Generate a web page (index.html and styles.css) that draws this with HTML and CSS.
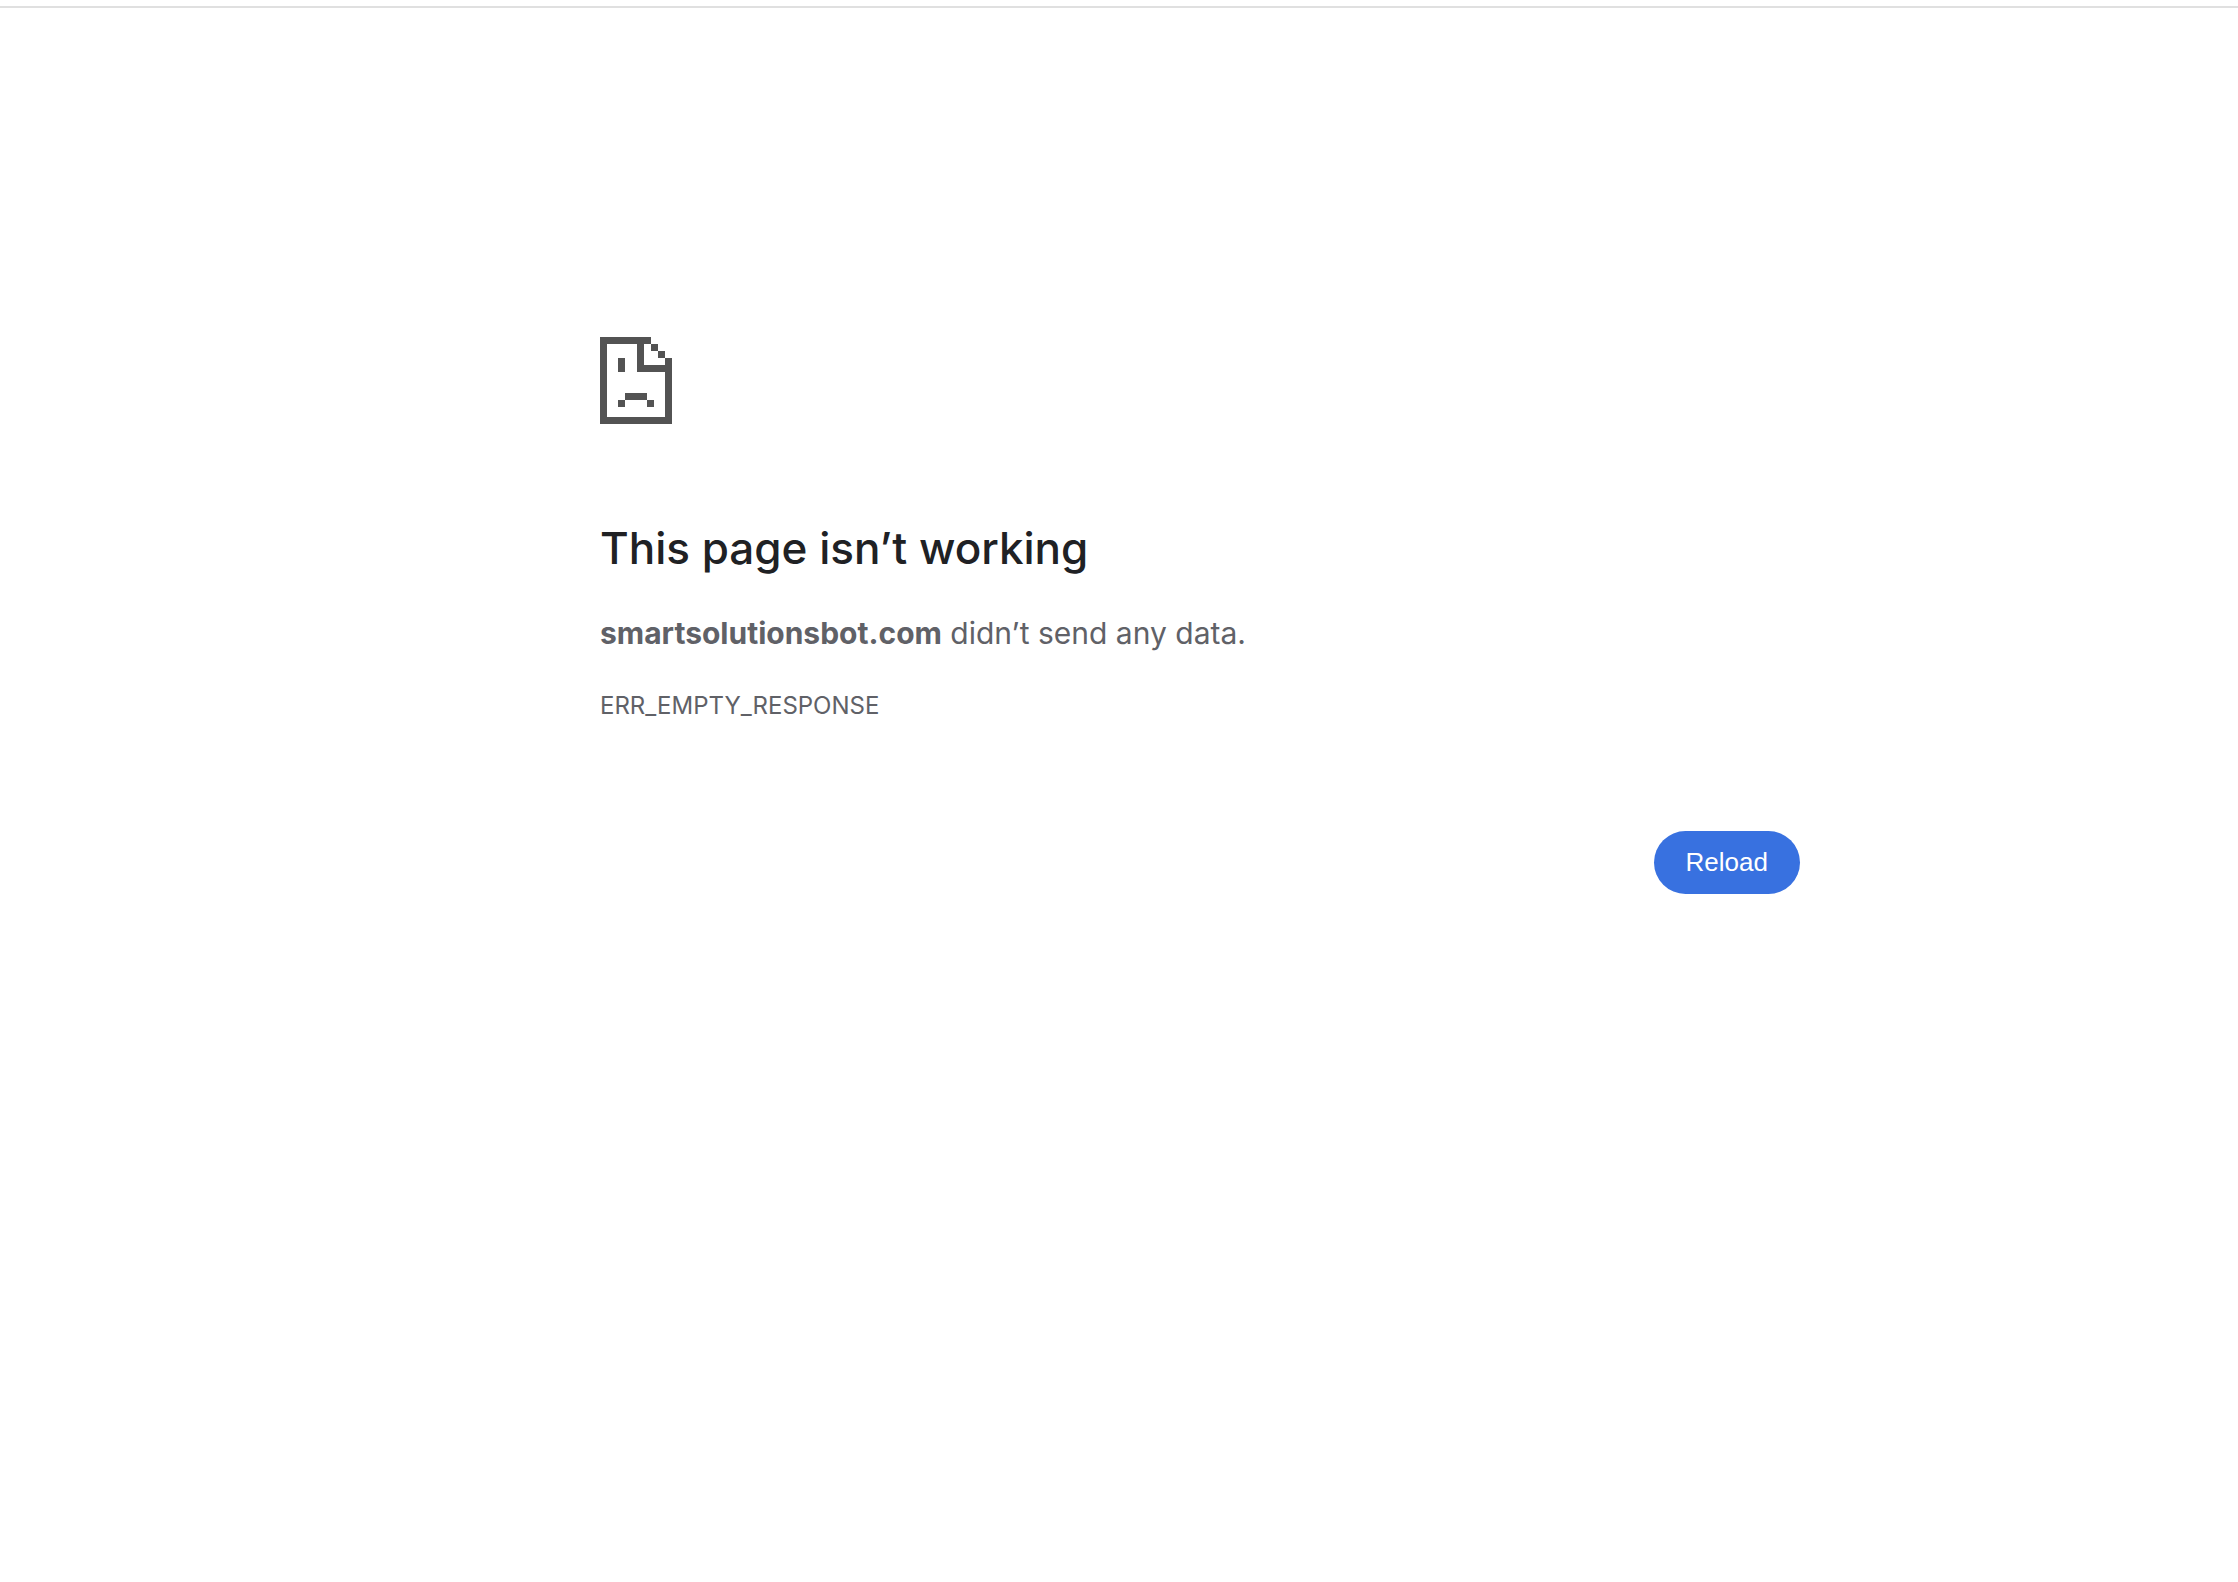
FILE: index.html
```html
<!DOCTYPE html>
<html lang="en">
<head>
  <meta charset="UTF-8">
  <meta name="viewport" content="width=device-width, initial-scale=1.0">
  <title>smartsolutionsbot.com</title>
  <link rel="stylesheet" href="styles.css">
</head>
<body>
  <main class="error-page">
    <svg class="error-icon" viewBox="0 0 72 87" shape-rendering="crispEdges" aria-hidden="true">
      <!-- page outline -->
      <path d="M0 0h51v7H7v73h58V35H37V7h7v21h21v-7h7v66H0z"/>
      <!-- folded corner -->
      <path d="M51 7h7v7h-7zM58 14h7v7h-7z"/>
      <!-- face -->
      <path d="M18 21h7v14h-7zM25 56h22v7H25zM18 63h7v7h-7zM47 63h7v7h-7z"/>
    </svg>
    <h1>This page isn’t working</h1>
    <p class="message"><strong>smartsolutionsbot.com</strong> didn’t send any data.</p>
    <p class="error-code">ERR_EMPTY_RESPONSE</p>
    <div class="buttons">
      <button type="button" class="reload" onclick="location.reload()">Reload</button>
    </div>
  </main>
</body>
</html>
```

FILE: styles.css
```css
body {
  margin: 0;
  padding: 6px 0 0 162px;
  background: #fff;
  color: #606167;
  font-family: Inter, "Liberation Sans", sans-serif;
}

body::before {
  content: "";
  display: block;
  height: 2px;
  margin-left: -162px;
  background: #e0e0e0;
}

.error-page {
  max-width: 1200px;
  margin: 0 auto;
  padding-top: 329px;
}

.error-icon {
  display: block;
  width: 72px;
  height: 87px;
  fill: #535353;
}

h1 {
  margin: 96px 0 33px;
  color: #202124;
  font-size: 44px;
  font-weight: 500;
  line-height: 56px;
}

p {
  margin: 0;
}

.message {
  font-size: 30px;
  line-height: 48px;
}

.error-code {
  margin-top: 25px;
  font-size: 24px;
  line-height: 48px;
}

.buttons {
  display: flex;
  justify-content: flex-end;
  margin-top: 101px;
}

.reload {
  padding: 16px 32px;
  border: 0;
  border-radius: 32px;
  background: #3871e0;
  color: #fff;
  font-family: "Liberation Sans", Arial, sans-serif;
  font-size: 26px;
  line-height: 31px;
  cursor: pointer;
}
```
